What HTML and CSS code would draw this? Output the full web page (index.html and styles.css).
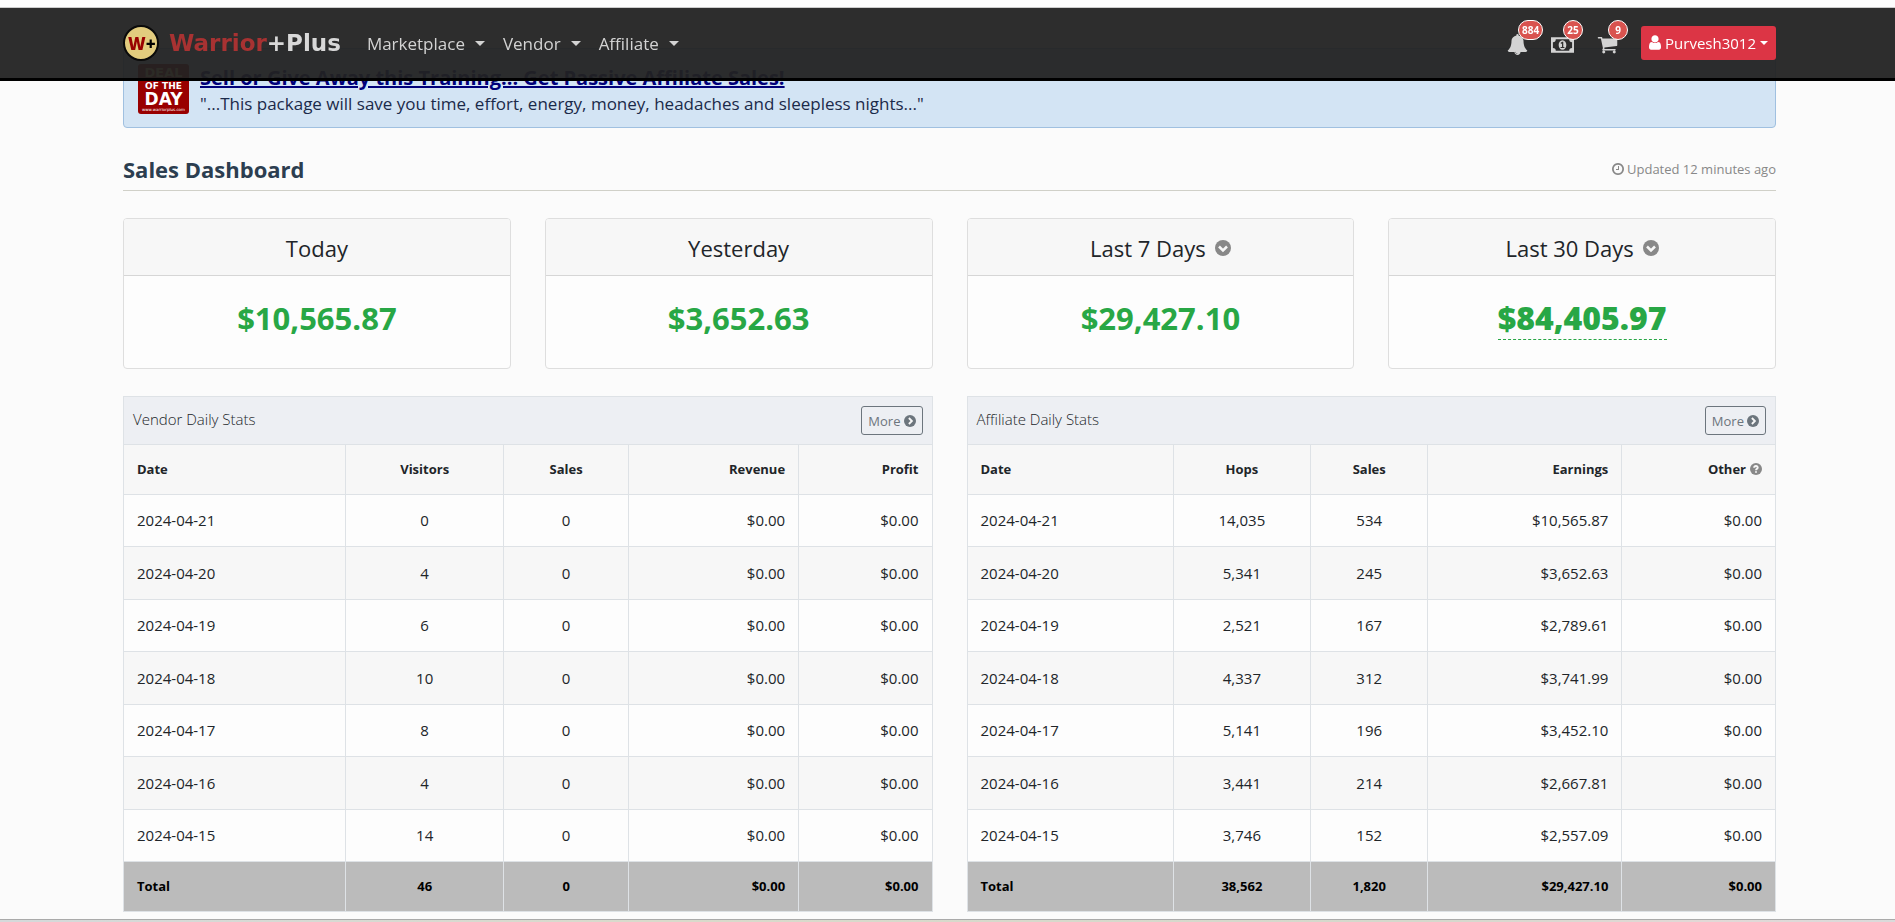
FILE: index.html
```
<!DOCTYPE html>
<html lang="en">
<head>
<meta charset="utf-8">
<meta name="viewport" content="width=device-width, initial-scale=1">
<title>Sales Dashboard - Warrior+Plus</title>
<link rel="stylesheet" href="styles.css">
</head>
<body>
<svg class="sprite" aria-hidden="true">
  <symbol id="i-bell" viewBox="0 0 1792 1792"><path d="M912 1696q0-16-16-16-59 0-101.5-42.5t-42.5-101.5q0-16-16-16t-16 16q0 73 51.5 124.5t124.5 51.5q16 0 16-16zm816-288q0 52-38 90t-90 38h-448q0 106-75 181t-181 75-181-75-75-181h-448q-52 0-90-38t-38-90q50-42 91-88t85-119.5 74.5-158.5 50-206 19.5-260q0-152 117-282.5t307-158.5q-8-19-8-39 0-40 28-68t68-28 68 28 28 68q0 20-8 39 190 28 307 158.5t117 282.5q0 139 19.5 260t50 206 74.5 158.5 85 119.5 91 88z"/></symbol>
  <symbol id="i-money" viewBox="0 0 24 16"><path fill-rule="evenodd" d="M0 0h24v16H0zM5 2a3 3 0 0 1-3 3v6a3 3 0 0 1 3 3h14a3 3 0 0 1 3-3V5a3 3 0 0 1-3-3zM12 3c2.500 0 4 2.300 4 5s-1.500 5-4 5-4-2.300-4-5 1.500-5 4-5zM10 10v1.200h4V10h-1.200V4.500h-1.200L9.900 6l.8.900.8-.7V10z"/></symbol>
  <symbol id="i-cart" viewBox="0 0 1792 1792"><path d="M704 1536q0 52-38 90t-90 38-90-38-38-90 38-90 90-38 90 38 38 90zm896 0q0 52-38 90t-90 38-90-38-38-90 38-90 90-38 90 38 38 90zm128-1088v512q0 24-16.500 42.500t-40.500 21.500l-1044 122q13 60 13 70 0 16-24 64h920q26 0 45 19t19 45-19 45-45 19h-1024q-26 0-45-19t-19-45q0-11 8-31.500t16-36 21.500-40 15.500-29.500l-177-823h-204q-26 0-45-19t-19-45 19-45 45-19h256q16 0 28.500 6.500t19.500 15.500 13 24.500 8 26 5.500 29.500 4.500 26h1201q26 0 45 19t19 45z"/></symbol>
  <symbol id="i-user" viewBox="256 128 1280 1536"><path d="M1536 1399q0 109-62.500 187t-150.500 78h-854q-88 0-150.500-78t-62.500-187q0-85 8.500-160.500t31.500-152 58.500-131 94-89 134.500-34.500q131 128 313 128t313-128q76 0 134.500 34.500t94 89 58.500 131 31.500 152 8.500 160.500zm-256-887q0 159-112.500 271.500t-271.500 112.500-271.500-112.500-112.500-271.500 112.500-271.500 271.500-112.500 271.500 112.500 112.500 271.500z"/></symbol>
  <symbol id="i-clock" viewBox="128 128 1536 1536"><path d="M1024 544v448q0 14-9 23t-23 9h-320q-14 0-23-9t-9-23v-64q0-14 9-23t23-9h224v-352q0-14 9-23t23-9h64q14 0 23 9t9 23zm416 352q0-148-73-273t-198-198-273-73-273 73-198 198-73 273 73 273 198 198 273 73 273-73 198-198 73-273zm224 0q0 209-103 385.500t-279.500 279.500-385.500 103-385.500-103-279.500-279.500-103-385.500 103-385.500 279.500-279.500 385.500-103 385.500 103 279.500 279.500 103 385.500z"/></symbol>
  <symbol id="i-down" viewBox="0 0 16 16"><circle cx="8" cy="8" r="8"/><path class="cut" d="M4 6.500l4 4 4-4"/></symbol>
  <symbol id="i-right" viewBox="0 0 16 16"><circle cx="8" cy="8" r="8"/><path class="cut" d="M6.500 4l4 4-4 4"/></symbol>
  <symbol id="i-help" viewBox="0 0 16 16"><circle cx="8" cy="8" r="8"/><path class="cut" d="M5.500 6.300C5.700 3.200 10.500 3.400 10.300 6.200 10.200 7.700 8 7.700 8 9.700M8 11v2"/></symbol>
</svg>

<header class="navbar">
  <div class="container navbar-inner">
    <a class="brand" href="#">
      <svg class="brand-mark" viewBox="0 0 36 36" aria-hidden="true">
        <circle cx="18" cy="18" r="17" fill="#e2cc7e" stroke="#0a0a0a" stroke-width="2"/>
        <text x="5" y="25" class="mark">W<tspan class="mark-plus">+</tspan></text>
      </svg>
      <span class="brand-name"><span class="brand-red">Warrior</span>+Plus</span>
    </a>
    <nav class="menu">
      <a class="menu-link" href="#">Marketplace<span class="caret"></span></a>
      <a class="menu-link" href="#">Vendor<span class="caret"></span></a>
      <a class="menu-link" href="#">Affiliate<span class="caret"></span></a>
    </nav>
    <div class="tools">
      <a class="tool" href="#" aria-label="Notifications"><svg class="tool-icon"><use href="#i-bell"/></svg><span class="badge">884</span></a>
      <a class="tool" href="#" aria-label="Payments"><svg class="tool-icon tool-money"><use href="#i-money"/></svg><span class="badge">25</span></a>
      <a class="tool" href="#" aria-label="Cart"><svg class="tool-icon"><use href="#i-cart"/></svg><span class="badge">9</span></a>
      <button class="user" type="button"><svg class="user-icon"><use href="#i-user"/></svg>Purvesh3012<span class="caret caret-user"></span></button>
    </div>
  </div>
</header>

<main class="container page">
  <section class="deal">
    <div class="deal-logo"><span class="deal-top">DEAL</span><span class="deal-mid">OF THE</span><span class="deal-big">DAY</span><span class="deal-url">www.warriorplus.com</span></div>
    <div class="deal-text">
      <a class="deal-title" href="#">Sell or Give Away this Training... Get Passive Affiliate Sales!</a>
      <p class="deal-sub">"...This package will save you time, effort, energy, money, headaches and sleepless nights..."</p>
    </div>
  </section>

  <div class="heading">
    <h1 class="heading-title">Sales Dashboard</h1>
    <span class="updated"><svg class="updated-icon"><use href="#i-clock"/></svg>Updated 12 minutes ago</span>
  </div>

  <section class="cards">
    <article class="card"><h2 class="card-title">Today</h2><p class="card-amount">$10,565.87</p></article>
    <article class="card"><h2 class="card-title">Yesterday</h2><p class="card-amount">$3,652.63</p></article>
    <article class="card"><h2 class="card-title">Last 7 Days<svg class="card-icon"><use href="#i-down"/></svg></h2><p class="card-amount">$29,427.10</p></article>
    <article class="card"><h2 class="card-title">Last 30 Days<svg class="card-icon"><use href="#i-down"/></svg></h2><p class="card-amount"><span class="card-tip">$84,405.97</span></p></article>
  </section>

  <div class="panels">
    <section class="panel">
      <div class="panel-head"><h2 class="panel-title">Vendor Daily Stats</h2><a class="more" href="#">More<svg class="more-icon"><use href="#i-right"/></svg></a></div>
      <table class="stats stats-vendor">
        <colgroup><col class="v1"><col class="v2"><col class="v3"><col class="v4"><col class="v5"></colgroup>
        <thead><tr><th>Date</th><th>Visitors</th><th>Sales</th><th>Revenue</th><th>Profit</th></tr></thead>
        <tbody>
          <tr><td>2024-04-21</td><td>0</td><td>0</td><td>$0.00</td><td>$0.00</td></tr>
          <tr><td>2024-04-20</td><td>4</td><td>0</td><td>$0.00</td><td>$0.00</td></tr>
          <tr><td>2024-04-19</td><td>6</td><td>0</td><td>$0.00</td><td>$0.00</td></tr>
          <tr><td>2024-04-18</td><td>10</td><td>0</td><td>$0.00</td><td>$0.00</td></tr>
          <tr><td>2024-04-17</td><td>8</td><td>0</td><td>$0.00</td><td>$0.00</td></tr>
          <tr><td>2024-04-16</td><td>4</td><td>0</td><td>$0.00</td><td>$0.00</td></tr>
          <tr><td>2024-04-15</td><td>14</td><td>0</td><td>$0.00</td><td>$0.00</td></tr>
        </tbody>
        <tfoot><tr><td>Total</td><td>46</td><td>0</td><td>$0.00</td><td>$0.00</td></tr></tfoot>
      </table>
    </section>
    <section class="panel">
      <div class="panel-head"><h2 class="panel-title">Affiliate Daily Stats</h2><a class="more" href="#">More<svg class="more-icon"><use href="#i-right"/></svg></a></div>
      <table class="stats stats-affiliate">
        <colgroup><col class="a1"><col class="a2"><col class="a3"><col class="a4"><col class="a5"></colgroup>
        <thead><tr><th>Date</th><th>Hops</th><th>Sales</th><th>Earnings</th><th>Other<svg class="help-icon"><use href="#i-help"/></svg></th></tr></thead>
        <tbody>
          <tr><td>2024-04-21</td><td>14,035</td><td>534</td><td>$10,565.87</td><td>$0.00</td></tr>
          <tr><td>2024-04-20</td><td>5,341</td><td>245</td><td>$3,652.63</td><td>$0.00</td></tr>
          <tr><td>2024-04-19</td><td>2,521</td><td>167</td><td>$2,789.61</td><td>$0.00</td></tr>
          <tr><td>2024-04-18</td><td>4,337</td><td>312</td><td>$3,741.99</td><td>$0.00</td></tr>
          <tr><td>2024-04-17</td><td>5,141</td><td>196</td><td>$3,452.10</td><td>$0.00</td></tr>
          <tr><td>2024-04-16</td><td>3,441</td><td>214</td><td>$2,667.81</td><td>$0.00</td></tr>
          <tr><td>2024-04-15</td><td>3,746</td><td>152</td><td>$2,557.09</td><td>$0.00</td></tr>
        </tbody>
        <tfoot><tr><td>Total</td><td>38,562</td><td>1,820</td><td>$29,427.10</td><td>$0.00</td></tr></tfoot>
      </table>
    </section>
  </div>
</main>
<div class="bottom-edge"></div>
</body>
</html>
```
FILE: styles.css
```
* { box-sizing: border-box; }
body {
  margin: 0;
  min-height: 100vh;
  display: flex;
  flex-direction: column;
  background: #fbfbfb;
  color: #212529;
  font-family: "Open Sans", "Noto Sans", sans-serif;
  font-size: 15px;
  line-height: 24px;
}
h1, h2, p { margin: 0; }
a { color: inherit; text-decoration: none; }
svg { fill: currentColor; }
.sprite { position: absolute; width: 0; height: 0; }
.cut { fill: none; stroke: #f7f7f7; stroke-width: 2.5; }
.container { margin: 0 119px 0 123px; }

/* Navigation, fixed over the page */
.navbar {
  position: fixed;
  top: 0;
  left: 0;
  right: 0;
  z-index: 10;
  border-top: 7px solid #fdfdfd;
  border-bottom: 3px solid #000;
  background: rgba(34, 34, 34, .95);
  box-shadow: inset 0 1px 0 #ccc;
}
.navbar-inner { display: flex; align-items: center; height: 71px; }
.brand { display: flex; align-items: center; gap: 10px; color: #d8d8d8; }
.brand-mark { width: 36px; height: 36px; }
.mark { font: 800 17px "Open Sans", sans-serif; fill: #900; }
.mark-plus { fill: #000; }
.brand-name { font: bold 23px/32px "DejaVu Sans", sans-serif; }
.brand-red { color: #a83232; }
.menu { display: flex; gap: 18px; margin-left: 26px; padding-top: 2px; }
.menu-link { display: flex; align-items: center; font-size: 17px; color: #d3d3d3; }
.caret {
  margin-left: 10px;
  border: 5px solid transparent;
  border-top-color: currentColor;
  border-bottom-width: 0;
}
.tools { display: flex; align-items: center; gap: 22px; margin-left: auto; color: #d3d3d3; }
.tool { position: relative; display: flex; align-items: center; height: 24px; padding-top: 4px; }
.tool-icon { width: 23px; height: 21px; }
.tool-money { height: 16px; }
.badge {
  position: absolute;
  left: 12px;
  bottom: 15px;
  min-width: 20px;
  padding: 0 3px;
  border: 1px solid #fff;
  border-radius: 10px;
  background: #d9534f;
  color: #fff;
  font-size: 10px;
  font-weight: 700;
  line-height: 18px;
  text-align: center;
}
.user {
  display: flex;
  align-items: center;
  height: 34px;
  padding: 0 8px;
  border: 0;
  border-radius: 3px;
  background: #dc3545;
  color: #fff;
  font: 15px/24px "Open Sans", sans-serif;
}
.user-icon { width: 12px; height: 15px; margin-right: 4px; }
.caret-user { margin-left: 4px; border-width: 4px 4px 0; }

/* Deal banner, scrolled partly under the navigation */
.page { padding-top: 48px; }
.deal {
  display: flex;
  gap: 11px;
  height: 80px;
  padding: 15px 14px;
  border: 1px solid #a0c0e0;
  border-radius: 4px;
  background: #d3e4f4;
}
.deal-logo {
  display: flex;
  flex-direction: column;
  align-items: center;
  width: 51px;
  height: 50px;
  border-radius: 3px;
  background: #900;
  color: #fff;
  font-family: "DejaVu Sans", sans-serif;
  font-weight: bold;
}
.deal-top { color: #e2cc7e; font-size: 13px; line-height: 18px; }
.deal-mid { font-size: 9px; line-height: 9px; }
.deal-big { font-size: 17px; line-height: 17px; }
.deal-url { font-size: 4px; line-height: 4px; font-weight: normal; }
.deal-title {
  color: #00007a;
  font-size: 20px;
  font-weight: 700;
  line-height: 28px;
  text-decoration: underline 2px;
}
.deal-sub { color: #1b2a4a; font-size: 17px; line-height: 24px; }

.heading {
  display: flex;
  justify-content: space-between;
  align-items: center;
  height: 63px;
  padding-top: 20px;
  border-bottom: 1px solid #d0d0c8;
}
.heading-title { color: #2c3e50; font-size: 22px; font-weight: 700; line-height: 30px; }
.updated { display: flex; align-items: center; gap: 3px; color: #888; font-size: 13px; }
.updated-icon { width: 12px; height: 12px; }

.cards { display: grid; grid-template-columns: repeat(4, 1fr); gap: 34px; margin-top: 27px; }
.card { border: 1px solid #dedede; border-radius: 4px; background: #fdfdfd; overflow: hidden; text-align: center; }
.card-title {
  display: flex;
  align-items: center;
  justify-content: center;
  gap: 9px;
  height: 57px;
  padding-top: 2px;
  border-bottom: 1px solid #d6d6d6;
  background: #f7f7f7;
  font-size: 22px;
  font-weight: 500;
}
.card-icon { width: 16px; height: 16px; color: #888; }
.card-amount { height: 92px; padding-top: 22px; color: #28a745; font-size: 31px; font-weight: 700; line-height: 40px; }
.card-tip { font-size: 32px; font-weight: 800; border-bottom: 1px dashed currentColor; }

.panels { display: grid; grid-template-columns: 1fr 1fr; gap: 34px; margin-top: 27px; }
.panel-head {
  display: flex;
  justify-content: space-between;
  align-items: center;
  height: 48px;
  padding: 0 9px;
  border: 1px solid #dee2e6;
  border-bottom: 0;
  background: #edeff3;
}
.panel-title { padding-bottom: 4px; font-size: 15px; font-weight: 300; }
.more {
  display: flex;
  align-items: center;
  gap: 3px;
  height: 29px;
  padding: 1px 6px 0;
  border: 1px solid #6c757d;
  border-radius: 3px;
  color: #6c757d;
  font-size: 13px;
}
.more-icon { width: 12px; height: 12px; }

.stats { width: 100%; border-collapse: collapse; table-layout: fixed; background: #fdfdfd; }
.stats th, .stats td { padding: 13px 13px 14px; border: 1px solid #dee2e6; text-align: center; }
.stats tbody tr:nth-child(even) td { padding-top: 14px; }
.stats th:first-child, .stats td:first-child { text-align: left; }
.stats th:nth-child(n+4), .stats td:nth-child(n+4) { text-align: right; }
.stats th { background: #f7f7f7; font-size: 13px; font-weight: 700; line-height: 22px; }
.stats tbody tr:nth-child(even) { background: #f7f7f7; }
.stats tfoot td { background: #bbb; color: #000; font-size: 13px; font-weight: 700; line-height: 22px; }
.help-icon { width: 12px; height: 12px; margin-left: 4px; color: #888; vertical-align: -1px; }
.v1 { width: 27.5%; } .v2 { width: 19.5%; } .v3 { width: 15.5%; } .v4 { width: 21%; } .v5 { width: 16.5%; }
.a1 { width: 25.5%; } .a2 { width: 17%; } .a3 { width: 14.5%; } .a4 { width: 24%; } .a5 { width: 19%; }

.bottom-edge {
  height: 3px;
  margin-top: auto;
  border-top: 1px solid #aaa;
  background: linear-gradient(90deg, #d5d9da, #d9dacb 35%, #d5d8cc 75%, #e2d8d6 90%, #dadada);
}
```
